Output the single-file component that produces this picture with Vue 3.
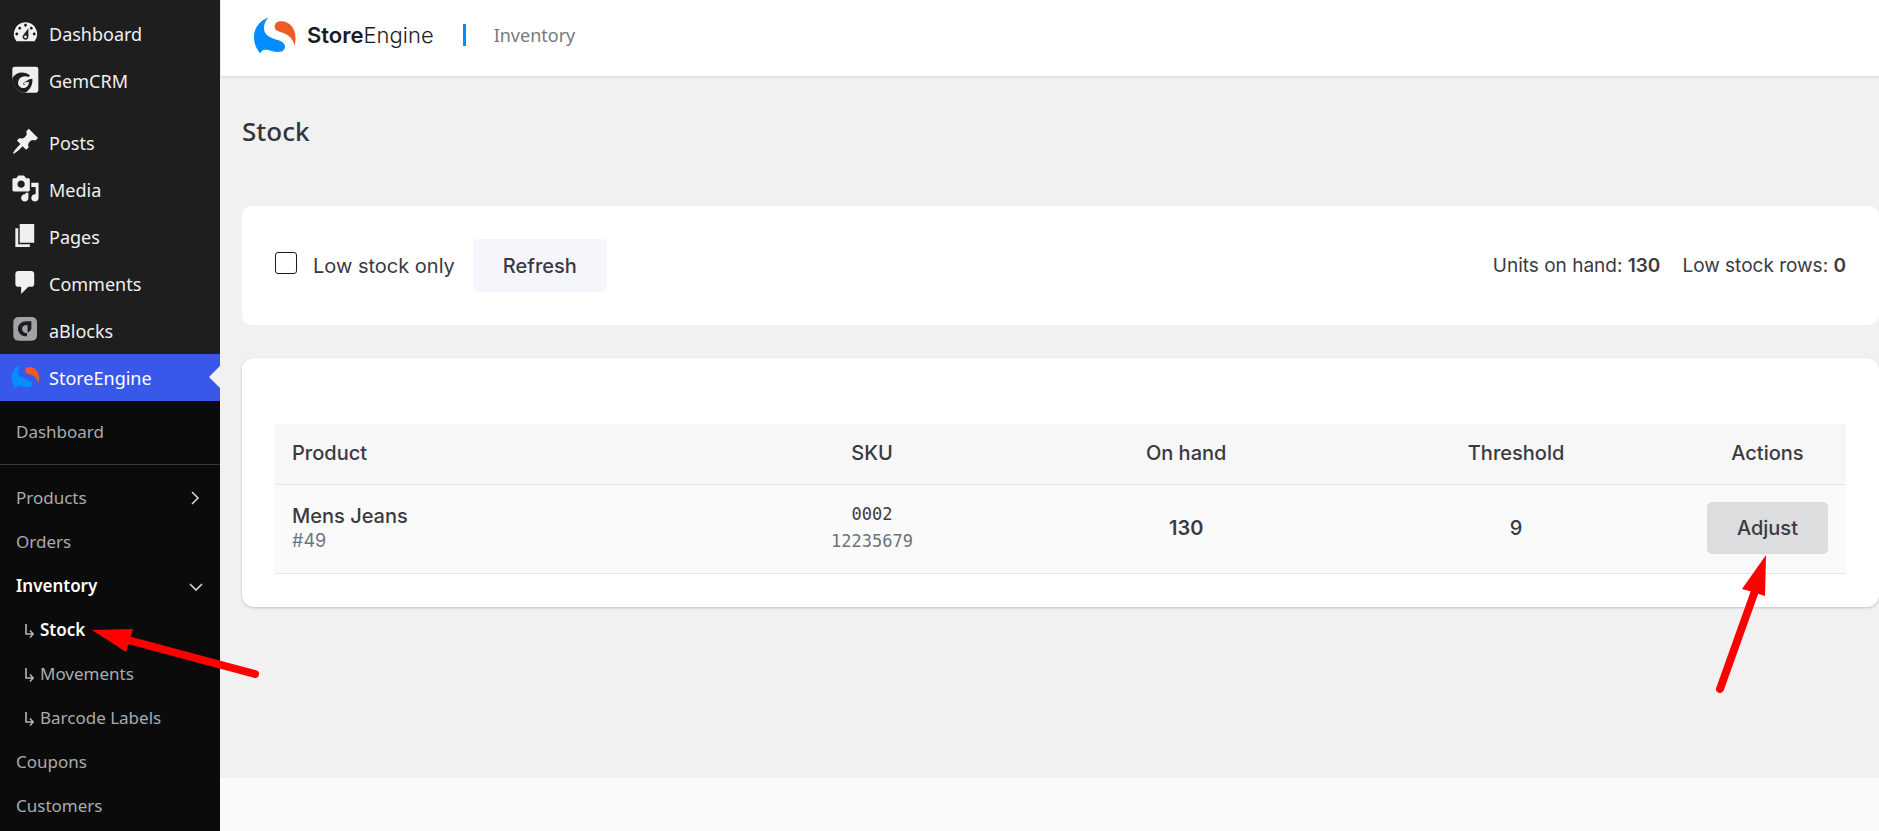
<script setup>
import { ref } from 'vue'

const lowOnly = ref(false)

const dashicons = {
  dashboard: 'M3.76 16h12.48A7.998 7.998 0 0 0 10 3a7.998 7.998 0 0 0-6.24 13zM10 4c.55 0 1 .45 1 1s-.45 1-1 1-1-.45-1-1 .45-1 1-1zM6 6c.55 0 1 .45 1 1s-.45 1-1 1-1-.45-1-1 .45-1 1-1zm8 0c.55 0 1 .45 1 1s-.45 1-1 1-1-.45-1-1 .45-1 1-1zm-5.37 5.55L12 7v6c0 1.1-.9 2-2 2s-2-.9-2-2c0-.57.24-1.08.63-1.45zM4 10c.55 0 1 .45 1 1s-.45 1-1 1-1-.45-1-1 .45-1 1-1zm12 0c.55 0 1 .45 1 1s-.45 1-1 1-1-.45-1-1 .45-1 1-1zm-5 3c0-.55-.45-1-1-1s-1 .45-1 1 .45 1 1 1 1-.45 1-1z',
  posts: 'M10.44 3.02l1.82-1.82 6.36 6.35-1.83 1.82c-1.05-.68-2.48-.57-3.41.36l-.75.75c-.92.93-1.04 2.35-.35 3.41l-1.83 1.82-2.41-2.41-2.8 2.79c-.42.42-3.38 2.71-3.8 2.29s1.86-3.39 2.28-3.81l2.79-2.79L4.1 9.36l1.83-1.82c1.05.69 2.48.57 3.4-.36l.75-.75c.93-.92 1.05-2.35.36-3.41z',
  media: 'M13 11V4c0-.55-.45-1-1-1h-1.67L9 1H5L3.67 3H2c-.55 0-1 .45-1 1v7c0 .55.45 1 1 1h10c.55 0 1-.45 1-1zM7 4.5c1.38 0 2.5 1.12 2.5 2.5S8.38 9.5 7 9.5 4.5 8.38 4.5 7 5.62 4.5 7 4.5zM14 6h5v10.5c0 1.38-1.12 2.5-2.5 2.5S14 17.88 14 16.5s1.12-2.5 2.5-2.5c.17 0 .34.02.5.05V9h-3V6zm-4 8.05V13h2v3.5c0 1.38-1.12 2.5-2.5 2.5S7 17.88 7 16.5 8.12 14 9.5 14c.17 0 .34.02.5.05z',
  pages: 'M6 15V2h10v13H6zm-1 1h8v2H3V5h2v11z',
  comments: 'M5 2h9c1.1 0 2 .9 2 2v7c0 1.1-.9 2-2 2h-2l-5 5v-5H5c-1.1 0-2-.9-2-2V4c0-1.1.9-2 2-2z'
}

const menu = [
  { label: 'Dashboard', icon: 'dashboard' },
  { label: 'GemCRM', icon: 'gem' },
  { label: 'Posts', icon: 'posts', spaced: true },
  { label: 'Media', icon: 'media' },
  { label: 'Pages', icon: 'pages' },
  { label: 'Comments', icon: 'comments' },
  { label: 'aBlocks', icon: 'ablocks' },
  { label: 'StoreEngine', icon: 'store', current: true }
]

const submenu = [
  { label: 'Dashboard', divider: true },
  { label: 'Products', chevron: 'right' },
  { label: 'Orders' },
  { label: 'Inventory', chevron: 'down', active: true },
  { label: 'Stock', nested: true, active: true, pointer: true },
  { label: 'Movements', nested: true },
  { label: 'Barcode Labels', nested: true },
  { label: 'Coupons' },
  { label: 'Customers' }
]

const rows = [
  { name: 'Mens Jeans', id: '#49', sku: '0002', barcode: '12235679', onHand: 130, threshold: 9 }
]
</script>

<template>
  <div class="shell">
    <nav class="sidebar" aria-label="Main menu">
      <ul class="menu">
        <li v-for="item in menu" :key="item.label" :class="{ spaced: item.spaced, current: item.current }">
          <a href="#">
            <svg v-if="item.icon === 'gem'" class="icon" viewBox="0 0 87 87" aria-hidden="true">
              <rect x="4" y="5" width="78" height="78" rx="7" fill="#f0f0f1" />
              <path d="M4 40C12 24 30 19 46 25L57 31L50 39C41 34 30 35 25 44C19 55 25 67 37 68C44 68 49 64 51 59H37V54L55 43L64 41C66 57 58 74 43 83H32C12 74 4 57 4 40Z" fill="#1e1e1e" />
              <path d="M54 37C44 31 31 34 25 42C16 57 25 70 39 69C49 67 54 59 54 50L38 53L39 57H44C40 62 33 60 32 52C31 43 41 39 48 43Z" fill="#f0f0f1" />
              <path d="M3 40V84H34C15 75 5 60 4 40Z" fill="#1e1e1e" />
            </svg>
            <svg v-else-if="item.icon === 'ablocks'" class="icon" viewBox="0 0 87 87" aria-hidden="true">
              <rect x="7" y="6" width="71" height="71" rx="15" fill="#a0a2a5" />
              <path d="M61 19H46C31 19 21 29 21 41C21 54 31 64 46 64H48V54C39 54 34 48 34 41C34 35 39 31 46 31H49V52H53L61 43Z" fill="#1e1e1e" />
              <path d="M49 31H46C39 31 34 35 34 41C34 48 39 53 46 53H49Z" fill="#a0a2a5" />
            </svg>
            <svg v-else-if="item.icon === 'store'" class="icon" viewBox="0 0 132 116" aria-hidden="true">
              <path d="M47 4C22 12 3 34 3 62C3 83 10 98 22 112C25 102 32 99 42 101C56 105 66 108 80 107C99 106 102 84 85 76C65 67 34 64 33 38C32 24 38 12 47 4Z" fill="#008dff" />
              <path d="M65 31C65 19 75 14 88 15C118 18 134 48 125 88C119 67 107 54 84 48C73 45 65 41 65 31Z" fill="#f15a24" />
            </svg>
            <svg v-else class="icon" viewBox="0 0 20 20" aria-hidden="true"><path :d="dashicons[item.icon]" fill="#f0f0f1" /></svg>
            <span>{{ item.label }}</span>
          </a>
        </li>
      </ul>
      <ul class="submenu">
        <li v-for="item in submenu" :key="item.label" :class="{ divider: item.divider, nested: item.nested, active: item.active }">
          <a href="#">
            <svg v-if="item.nested" class="branch" viewBox="0 0 9 16" aria-hidden="true"><path d="M1 1V11H8M5 7.5L8.2 11L5 14.5" /></svg>
            <span>{{ item.label }}</span>
            <svg v-if="item.chevron" class="chevron" viewBox="0 0 14 14" aria-hidden="true">
              <path v-if="item.chevron === 'right'" d="M3 2L9 8L3 14" />
              <path v-else d="M1 6L7 12L13 6" />
            </svg>
          </a>
          <svg v-if="item.pointer" class="pointer-left" viewBox="0 0 168 50" aria-hidden="true">
            <path d="M0 1L41 0L38 10L34 23Z" fill="#f00" />
            <path d="M36 11L163 45" stroke="#f00" stroke-width="8" stroke-linecap="round" />
          </svg>
        </li>
      </ul>
    </nav>

    <div class="page">
      <header class="topbar">
        <a href="#" class="brand">
          <svg class="logo" viewBox="0 0 132 116" aria-hidden="true">
            <path d="M47 4C22 12 3 34 3 62C3 83 10 98 22 112C25 102 32 99 42 101C56 105 66 108 80 107C99 106 102 84 85 76C65 67 34 64 33 38C32 24 38 12 47 4Z" fill="#008dff" />
            <path d="M65 31C65 19 75 14 88 15C118 18 134 48 125 88C119 67 107 54 84 48C73 45 65 41 65 31Z" fill="#f15a24" />
          </svg>
          <span><b>Store</b>Engine</span>
        </a>
        <span class="crumb">Inventory</span>
      </header>

      <main class="content">
        <h1>Stock</h1>

        <section class="card toolbar">
          <label class="check"><input v-model="lowOnly" type="checkbox" /><span>Low stock only</span></label>
          <button type="button" class="btn light">Refresh</button>
          <p class="totals">
            <span>Units on hand: <b>130</b></span>
            <span>Low stock rows: <b>0</b></span>
          </p>
        </section>

        <section class="card listing">
          <table>
            <colgroup><col class="c-product" /><col class="c-sku" /><col class="c-hand" /><col class="c-threshold" /><col class="c-actions" /></colgroup>
            <thead>
              <tr><th>Product</th><th>SKU</th><th>On hand</th><th>Threshold</th><th>Actions</th></tr>
            </thead>
            <tbody>
              <tr v-for="row in rows" :key="row.id">
                <td><div class="name">{{ row.name }}</div><div class="muted">{{ row.id }}</div></td>
                <td><div class="code">{{ row.sku }}</div><div class="code muted">{{ row.barcode }}</div></td>
                <td><b>{{ row.onHand }}</b></td>
                <td class="name">{{ row.threshold }}</td>
                <td>
                  <div class="action">
                    <button type="button" class="btn grey">Adjust</button>
                    <svg class="pointer-up" viewBox="0 0 52 140" aria-hidden="true">
                      <path d="M51 0L50 41L38 37L27 34Z" fill="#f00" />
                      <path d="M40 36L5 134" stroke="#f00" stroke-width="8" stroke-linecap="round" />
                    </svg>
                  </div>
                </td>
              </tr>
            </tbody>
          </table>
        </section>
      </main>
      <footer class="footer"></footer>
    </div>
  </div>
</template>

<style>
body {
  margin: 0;
  background: #f1f1f1;
}
</style>

<style scoped>
* {
  box-sizing: border-box;
}
.shell {
  display: flex;
  min-height: 100vh;
  font-family: Inter, sans-serif;
  font-size: 20px;
  color: #3a3a42;
}
ul {
  margin: 0;
  padding: 0;
  list-style: none;
}
a {
  color: inherit;
  text-decoration: none;
}
.sidebar {
  position: relative;
  z-index: 1;
  flex: 0 0 220px;
  background: #0b0b0b;
  font-family: "Noto Sans", sans-serif;
  font-size: 17px;
}
.menu {
  padding-top: 10px;
  background: #1e1e1e;
  color: #f0f0f1;
  font-size: 18px;
}
.menu a {
  display: flex;
  align-items: center;
  gap: 9px;
  height: 47px;
  padding-left: 11px;
}
.icon {
  width: 29px;
  height: 29px;
  margin-bottom: 3px;
}
.spaced {
  margin-top: 15px;
}
.current {
  position: relative;
  background: #3858e9;
  color: #fff;
}
.current::after {
  content: "";
  position: absolute;
  right: 0;
  top: 12px;
  border: 11px solid transparent;
  border-left-width: 0;
  border-right-color: #f1f1f1;
}
.submenu {
  padding-top: 8px;
  color: #a9abae;
}
.submenu li {
  position: relative;
}
.submenu a {
  display: flex;
  align-items: center;
  height: 44px;
  padding: 0 17px 0 16px;
}
.submenu .divider {
  margin-bottom: 10px;
  padding-bottom: 11px;
  border-bottom: 1px solid #3a3a3a;
}
.submenu .nested a {
  gap: 6px;
  padding-left: 25px;
}
.active span {
  color: #fff;
  font-weight: 600;
}
.chevron {
  width: 14px;
  height: 14px;
  margin-left: auto;
  overflow: visible;
  fill: none;
  stroke: #d0d3d6;
  stroke-width: 1.6;
}
.branch {
  width: 9px;
  height: 16px;
  margin-top: 4px;
  fill: none;
  stroke: #b4b6b9;
  stroke-width: 1.6;
}
.pointer-left {
  position: absolute;
  left: 92px;
  top: 22px;
  width: 168px;
  height: 50px;
}
.page {
  display: flex;
  flex: 1;
  flex-direction: column;
  min-width: 0;
  background: #f1f1f1;
}
.topbar {
  display: flex;
  align-items: center;
  height: 76px;
  margin-left: 1px;
  padding: 0 32px 6px;
  background: #fff;
  box-shadow: 0 1px 3px rgba(0, 0, 0, 0.12);
}
.brand {
  display: flex;
  align-items: center;
  gap: 10px;
  color: #1b1b1f;
  font-size: 22px;
  font-weight: 300;
}
.brand b {
  font-weight: 600;
}
.logo {
  width: 44px;
  height: 39px;
}
.crumb {
  margin-left: 29px;
  padding-left: 28px;
  border-left: 3px solid #008dff;
  color: #777980;
  font-family: "Noto Sans", sans-serif;
  font-size: 18px;
  line-height: 22px;
}
.content {
  flex: 1;
  padding: 0 0 32px 22px;
}
h1 {
  margin: 35px 0 55px;
  color: #34343c;
  font-family: "Noto Sans", sans-serif;
  font-size: 26px;
  font-weight: 500;
  line-height: 40px;
}
.card {
  padding: 33px;
  background: #fff;
  border-radius: 10px;
}
.toolbar {
  display: flex;
  align-items: center;
  gap: 18px;
  margin-bottom: 33px;
}
.check {
  display: flex;
  align-items: center;
  gap: 16px;
}
.check input {
  appearance: none;
  width: 22px;
  height: 22px;
  margin: 0 0 6px;
  border: 1px solid #1e1e1e;
  border-radius: 3px;
  background: #fff;
}
.check input:checked {
  background: #3858e9;
}
.btn {
  height: 53px;
  padding: 0 30px;
  border: 0;
  border-radius: 5px;
  color: #3a3a42;
  font-family: inherit;
  font-size: 20px;
  font-weight: 500;
}
.light {
  background: #f5f6fb;
}
.grey {
  height: 52px;
  background: #dcddde;
}
.totals {
  display: flex;
  gap: 22px;
  margin: 0 0 0 auto;
  font-size: 19px;
}
b {
  font-weight: 600;
}
.listing {
  padding-top: 66px;
  border-radius: 12px;
  box-shadow: 0 1px 3px rgba(0, 0, 0, 0.2);
}
table {
  width: 100%;
  border-collapse: separate;
  border-spacing: 0;
  table-layout: fixed;
}
.c-product {
  width: 28%;
}
.c-sku {
  width: 20%;
}
.c-hand {
  width: 20%;
}
.c-threshold {
  width: 22%;
}
.c-actions {
  width: 10%;
}
th,
td {
  padding: 0 17px 2px;
  border-bottom: 1px solid #e6e6e8;
  text-align: center;
}
th:first-child,
td:first-child {
  text-align: left;
}
th {
  height: 61px;
  background: #f7f7f7;
  font-weight: 500;
}
td {
  height: 89px;
  background: #fafafa;
}
.name {
  font-weight: 500;
}
.muted {
  color: #6c757d;
  font-size: 18px;
  line-height: 25px;
}
.code {
  font-family: "DejaVu Sans Mono", monospace;
  font-size: 17px;
  line-height: 27px;
}
.action {
  display: flex;
  justify-content: center;
  position: relative;
}
.pointer-up {
  position: absolute;
  right: 62px;
  top: 53px;
  width: 52px;
  height: 140px;
}
.footer {
  height: 53px;
  background: #fafafa;
}
</style>
